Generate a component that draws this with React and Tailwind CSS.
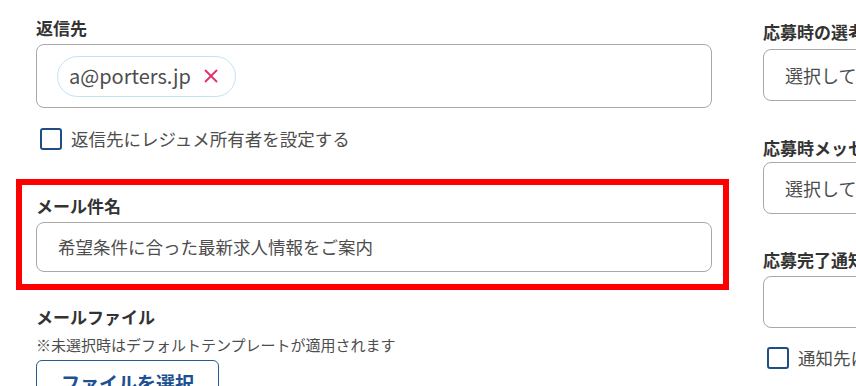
import { X } from 'lucide-react'

const font = { fontFamily: '"Noto Sans CJK JP", "Noto Sans", sans-serif' }

function Checkbox({ label }) {
  return (
    <label className="flex items-center h-[22px]">
      <span className="ml-1 w-[22px] h-[22px] shrink-0 rounded-[3px] border-2 border-[#1f4e85] bg-white" />
      <span className="ml-[9px] text-[17.5px] leading-6 text-[#4d4d4d] whitespace-nowrap">{label}</span>
    </label>
  )
}

function SelectBox({ placeholder }) {
  return (
    <div className="h-[52px] rounded-lg border border-[#a8a8a8] px-[21px] flex items-center text-[18px] text-[#4d4d4d] whitespace-nowrap">
      {placeholder}
    </div>
  )
}

export default function App() {
  return (
    <div style={font} className="w-[856px] h-[386px] overflow-hidden bg-white">
      <div className="flex gap-[51px] pl-[36px] pt-[16px]">
        {/* left column */}
        <div className="w-[676px] shrink-0">
          <p className="text-[17px] font-bold leading-6 text-[#333]">返信先</p>
          <div className="mt-1 h-[64px] rounded-lg border border-[#a8a8a8] px-5 flex items-center">
            <span className="h-[41px] flex items-center rounded-full border border-[#bfe4f7] pl-[11px] pr-[13px]">
              <span className="text-[20px] text-[#4d4d4d]">a@porters.jp</span>
              <X size={22} strokeWidth={2.1} className="ml-[9px] text-[#e2336b]" />
            </span>
          </div>

          <div className="mt-5">
            <Checkbox label="返信先にレジュメ所有者を設定する" />
          </div>

          {/* highlighted field */}
          <div className="mt-[29px] -ml-[20px] w-[713px] border-[6px] border-[#ff0000] pl-[14px] pr-[11px] pt-[9px] pb-[12px]">
            <p className="text-[17px] font-bold leading-6 text-[#333]">メール件名</p>
            <div className="mt-1 h-[50px] rounded-lg border border-[#a8a8a8] px-[21px] flex items-center text-[17.5px] text-[#4d4d4d]">
              希望条件に合った最新求人情報をご案内
            </div>
          </div>

          <p className="mt-[15px] text-[17px] font-bold leading-6 text-[#333]">メールファイル</p>
          <p className="mt-[6px] text-[15px] leading-5 text-[#4d4d4d]">※未選択時はデフォルトテンプレートが適用されます</p>
          <button className="mt-[5px] h-[46px] w-[183px] rounded-md border border-[#255c97] bg-white text-[19px] font-bold text-[#1d5190]">
            ファイルを選択
          </button>
        </div>

        {/* right column */}
        <div className="w-[676px] shrink-0 pt-1">
          <p className="text-[17px] font-bold leading-6 text-[#333] whitespace-nowrap">応募時の選考ステップ</p>
          <div className="mt-[5px]">
            <SelectBox placeholder="選択してください" />
          </div>

          <p className="mt-[35px] text-[17px] font-bold leading-6 text-[#333] whitespace-nowrap">応募時メッセージテンプレート</p>
          <div className="mt-[2px]">
            <SelectBox placeholder="選択してください" />
          </div>

          <p className="mt-[34px] text-[17px] font-bold leading-6 text-[#333] whitespace-nowrap">応募完了通知先</p>
          <div className="mt-1">
            <SelectBox placeholder="" />
          </div>

          <div className="mt-[19px]">
            <Checkbox label="通知先にレジュメ所有者を設定する" />
          </div>
        </div>
      </div>
    </div>
  )
}
